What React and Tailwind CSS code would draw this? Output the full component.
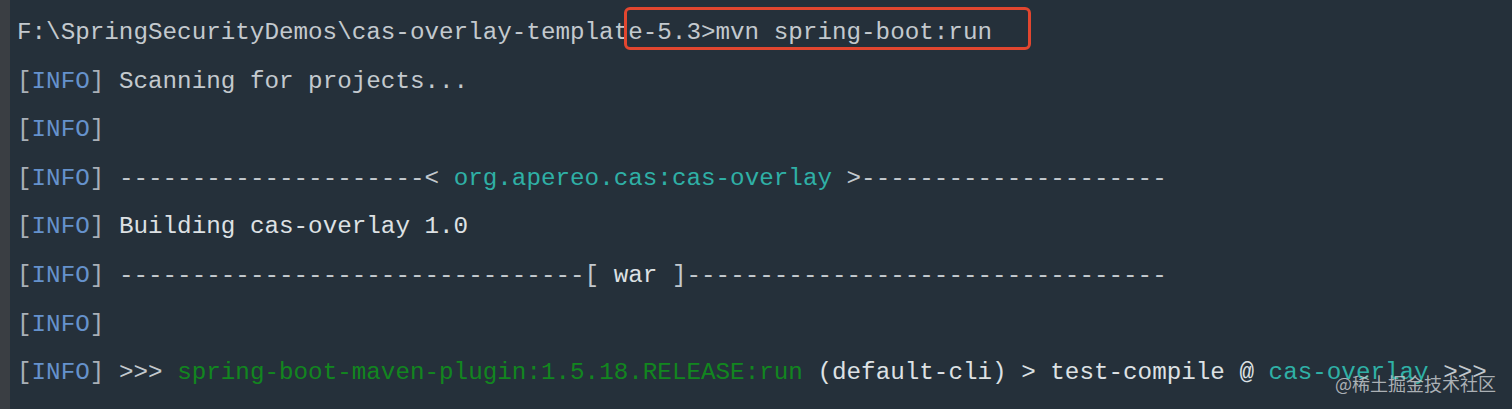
export default function App() {
  const dash21 = "-".repeat(21);
  const dash32 = "-".repeat(32);
  const dash33 = "-".repeat(33);
  const Info = () => (
    <>
      <span className="text-[#a9b0b7]">[</span>
      <span className="text-[#6592cc]">INFO</span>
      <span className="text-[#a9b0b7]">]</span>{" "}
    </>
  );
  return (
    <div className="relative w-[1512px] h-[409px] overflow-hidden bg-[#25303a] flex">
      <div className="w-[10px] shrink-0 bg-[#3a3e43]" />
      <div
        className="pl-[7px] pt-[9px] text-[24.25px] leading-[48.6px] whitespace-pre text-[#c3c9ce]"
        style={{ fontFamily: '"Liberation Mono", "Noto Sans CJK SC", monospace' }}
      >
        <div>F:\SpringSecurityDemos\cas-overlay-template-5.3&gt;mvn spring-boot:run</div>
        <div><Info />Scanning for projects...</div>
        <div><Info /></div>
        <div>
          <Info />
          {dash21}&lt; <span className="text-[#2fb0a6]">org.apereo.cas:cas-overlay</span> &gt;{dash21}
        </div>
        <div><Info /><span className="text-[#dde1e4]">Building cas-overlay 1.0</span></div>
        <div><Info />{dash32}[ <span className="text-[#dde1e4]">war</span> ]{dash33}</div>
        <div><Info /></div>
        <div>
          <Info />
          &gt;&gt;&gt; <span className="text-[#12861f]">spring-boot-maven-plugin:1.5.18.RELEASE:run</span>{" "}
          <span className="text-[#dde1e4]">(default-cli) &gt; test-compile @ </span>
          <span className="text-[#2fb0a6]">cas-overlay</span> &gt;&gt;&gt;
        </div>
        <div><Info /></div>
      </div>
      <div className="absolute left-[624px] top-[7px] w-[407px] h-[43px] border-[3px] border-[#e2462f] rounded-[6px]" />
      <div
        className="absolute left-[1335px] top-[371px] text-[18px] leading-[24px] text-[#c4c8cc]/85"
        style={{ fontFamily: '"Noto Sans CJK SC", sans-serif' }}
      >
        @稀土掘金技术社区
      </div>
    </div>
  );
}
